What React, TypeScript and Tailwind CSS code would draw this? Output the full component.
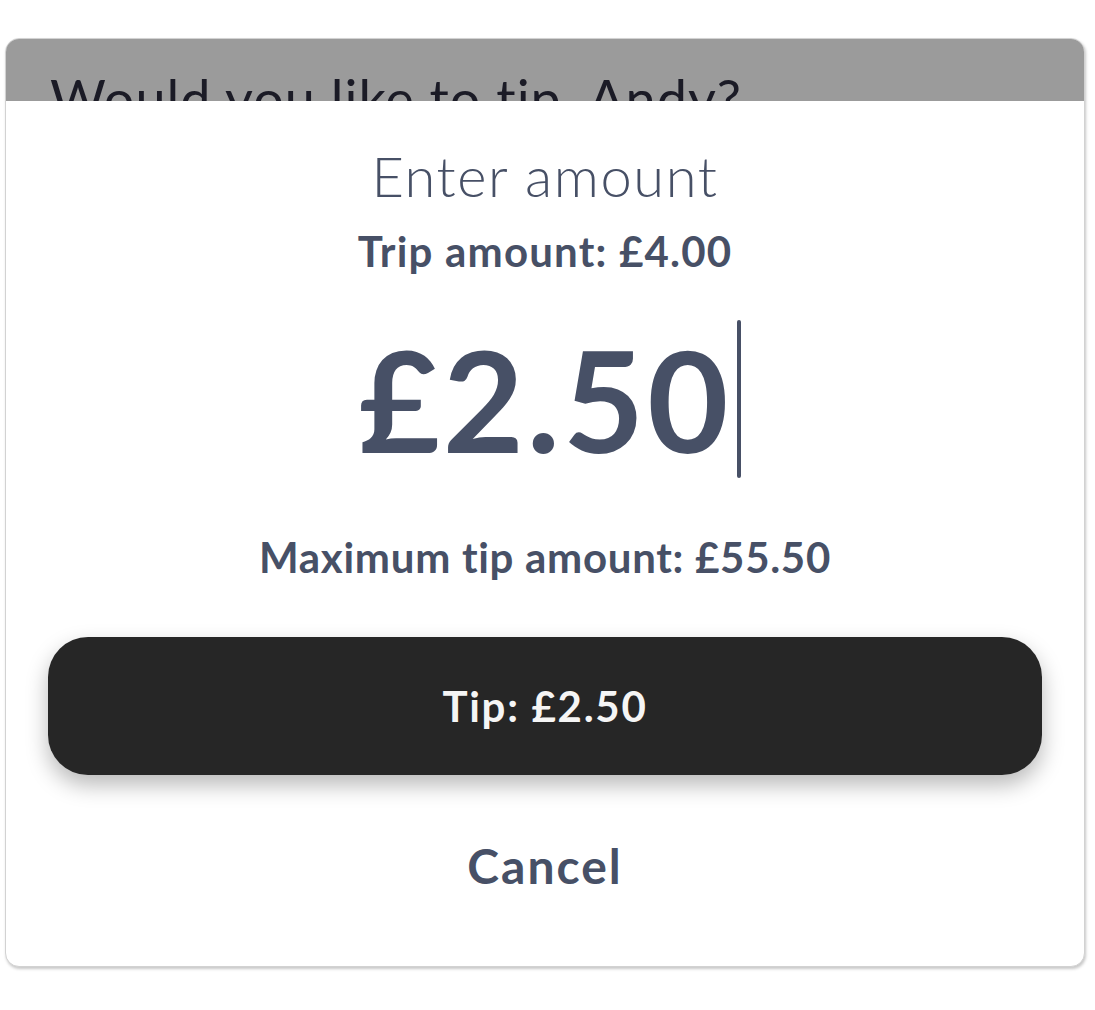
export default function App() {
  return (
    <div className="min-h-screen w-full bg-white font-['Lato','Inter',sans-serif] pt-[38px] pl-[5px]">
      <div className="w-[1080px] h-[929px] rounded-[14px] border border-[#d2d2d2] overflow-hidden bg-white shadow-[1px_2px_3px_rgba(0,0,0,0.22)] flex flex-col">
        {/* dimmed page behind the sheet */}
        <div className="h-[62px] shrink-0 overflow-hidden bg-[#9b9b9b] pt-[33px] pl-[44px]">
          <h1 className="text-[54px] leading-none font-normal tracking-[1px] text-[#1b1b26] whitespace-nowrap">
            Would you like to tip, Andy?
          </h1>
        </div>

        <div className="flex flex-col items-center text-[#475066]">
          <h2 className="mt-[47px] text-[56px] leading-none font-light tracking-[1.6px]">Enter amount</h2>
          <p className="mt-[26px] text-[42px] leading-none font-bold tracking-[1.2px]">Trip amount: £4.00</p>

          <div className="mt-[48px] h-[158px] flex items-center justify-center">
            <span className="relative text-[140px] leading-none font-bold tracking-[3px]">
              £2.50
              <span className="absolute left-full top-1/2 -translate-y-1/2 ml-[5px] w-[4px] h-[158px] rounded-full bg-[#475066]" />
            </span>
          </div>

          <p className="mt-[58px] text-[42px] leading-none font-bold tracking-[0.7px]">Maximum tip amount: £55.50</p>

          <button className="mt-[59px] self-stretch mx-[42px] h-[138px] rounded-[40px] bg-[#262626] text-[#f5f5f5] text-[42px] leading-none font-bold tracking-[1.7px] shadow-[0_10px_22px_rgba(0,0,0,0.28)]">
            Tip: £2.50
          </button>

          <button className="mt-[67px] text-[48px] leading-none font-bold tracking-[2px] text-[#475066]">Cancel</button>
        </div>
      </div>
    </div>
  );
}
